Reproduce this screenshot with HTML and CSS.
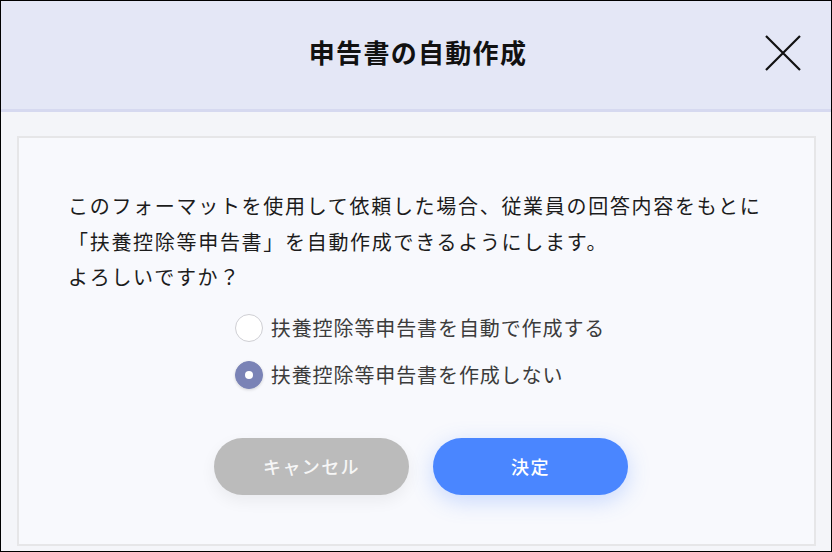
FILE: index.html
```html
<!DOCTYPE html>
<html lang="ja">
<head>
    <meta charset="UTF-8">
    <meta name="viewport" content="width=device-width, initial-scale=1.0">
    <title>申告書の自動作成</title>
    <link rel="stylesheet" href="styles.css">
</head>
<body>
    <div class="modal">
        <div class="modal-header">
            <h1 class="modal-title">申告書の自動作成</h1>
            <button class="close-btn" aria-label="閉じる">
                <svg width="36" height="36" viewBox="0 0 36 36">
                    <path d="M1 1 L35 35 M35 1 L1 35" stroke="#111" stroke-width="2.2" fill="none"/>
                </svg>
            </button>
        </div>

        <div class="modal-body">
            <div class="card">
                <p class="message">
                    このフォーマットを使用して依頼した場合、従業員の回答内容をもとに<br>
                    「扶養控除等申告書」を自動作成できるようにします。<br>
                    よろしいですか？
                </p>

                <div class="options">
                    <label class="option">
                        <input type="radio" name="auto" value="yes">
                        <span class="radio"></span>
                        <span class="option-label">扶養控除等申告書を自動で作成する</span>
                    </label>
                    <label class="option">
                        <input type="radio" name="auto" value="no" checked>
                        <span class="radio"></span>
                        <span class="option-label">扶養控除等申告書を作成しない</span>
                    </label>
                </div>

                <div class="actions">
                    <button class="btn btn-cancel">キャンセル</button>
                    <button class="btn btn-primary">決定</button>
                </div>
            </div>
        </div>
    </div>
</body>
</html>
```

FILE: styles.css
```css
* {
    box-sizing: border-box;
}
body {
    margin: 0;
    font-family: "Noto Sans CJK JP", "Noto Sans", sans-serif;
    background: #f4f5f9;
}
.modal {
    width: 832px;
    height: 552px;
    border: 1px solid #000;
    background: #f4f5f9;
    display: flex;
    flex-direction: column;
}
.modal-header {
    height: 111px;
    background: #e4e7f6;
    border-bottom: 3px solid #d6d9f0;
    display: flex;
    align-items: center;
    justify-content: center;
    position: relative;
    padding-bottom: 8px;
}
.modal-title {
    margin: 0 0 0 4px;
    font-size: 26px;
    font-weight: bold;
    letter-spacing: 1.3px;
    color: #111;
}
.close-btn {
    position: absolute;
    right: 30px;
    top: 34px;
    width: 36px;
    height: 36px;
    padding: 0;
    border: none;
    background: none;
    cursor: pointer;
}
.close-btn svg {
    display: block;
}
.modal-body {
    flex: 1;
    padding: 24px 15px 5px 16px;
    display: flex;
}
.card {
    flex: 1;
    background: #f8f9fd;
    border: 2px solid #e6e6e8;
    padding: 50px 48px 0 49px;
}
.message {
    margin: 0;
    font-size: 20px;
    line-height: 35.5px;
    letter-spacing: 1.7px;
    color: #1c1c1c;
}
.options {
    display: flex;
    flex-direction: column;
    align-items: flex-start;
    width: max-content;
    margin: 13px auto 0;
    position: relative;
    left: 3px;
    gap: 7px;
}
.option {
    display: flex;
    align-items: center;
    height: 40px;
    cursor: pointer;
}
.option input {
    display: none;
}
.radio {
    width: 28px;
    height: 28px;
    border-radius: 50%;
    background: #fff;
    border: 1px solid #cfcfd4;
    margin-right: 8px;
    position: relative;
}
.option input:checked + .radio {
    background: #7a83b6;
    border-color: #7a83b6;
    box-shadow: 0 1px 3px rgba(0,0,0,0.15);
}
.option input:checked + .radio::after {
    content: "";
    position: absolute;
    left: 9px;
    top: 9px;
    width: 8px;
    height: 8px;
    border-radius: 50%;
    background: #fff;
}
.option-label {
    font-size: 20px;
    letter-spacing: 0.9px;
    color: #3c3c3c;
}
.actions {
    display: flex;
    justify-content: center;
    gap: 24px;
    margin-top: 43px;
    padding-left: 8px;
}
.btn {
    width: 195px;
    height: 57px;
    border: none;
    border-radius: 29px;
    font-family: inherit;
    font-size: 18px;
    font-weight: 500;
    letter-spacing: 1.4px;
    color: #fff;
    cursor: pointer;
}
.btn-cancel {
    background: #bbbbbb;
    color: #f6f6f6;
    box-shadow: 0 6px 16px rgba(0,0,0,0.06);
}
.btn-primary {
    background: #4a86ff;
    box-shadow: 0 6px 22px rgba(74,134,255,0.28);
}
```
